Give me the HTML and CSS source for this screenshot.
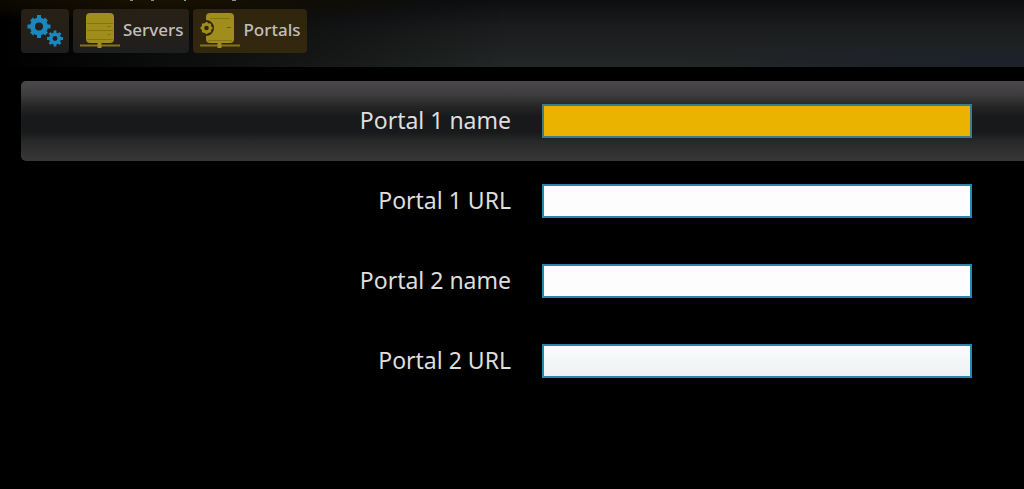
FILE: index.html
```
<!DOCTYPE html>
<html lang="en">
<head>
    <meta charset="UTF-8">
    <meta name="viewport" content="width=device-width, initial-scale=1.0">
    <title>Portals</title>
    <link rel="stylesheet" href="styles.css">
</head>
<body>

    <!-- Top bar with breadcrumb buttons -->
    <header class="topbar">
        <svg class="topbar-marks" width="120" height="1" aria-hidden="true">
            <path d="M10 0h3M31 0h3M112 0h4" stroke="#8f8d82" stroke-width="2"/>
            <path d="M64 0h2" stroke="#7fae78" stroke-width="2"/>
        </svg>
        <nav class="crumbs">
            <button type="button" class="crumb crumb-settings" aria-label="Settings">
                <svg width="48" height="44" viewBox="0 0 48 44" fill="none" stroke="#1b87bf">
                    <circle cx="18" cy="17.5" r="6.5" stroke-width="5"/>
                    <g stroke-width="4">
                        <path d="M18 6v4M18 25v4M6.5 17.5h4M25.5 17.5h4"/>
                        <path d="M10.5 10l3 3M22.5 22l3 3M25.5 10l-3 3M13.5 22l-3 3"/>
                    </g>
                    <circle cx="34" cy="29.5" r="4.2" stroke-width="3.6"/>
                    <g stroke-width="2.8">
                        <path d="M34 21.5v3M34 34.5v3M26 29.5h3M39 29.5h3"/>
                        <path d="M28.6 24.1l2 2M37.4 32.9l2 2M39.4 24.1l-2 2M30.6 32.9l-2 2"/>
                    </g>
                </svg>
            </button>
            <button type="button" class="crumb">
                <svg width="40" height="36" viewBox="0 0 40 36">
                    <rect x="6" y="0" width="28" height="30" rx="4" fill="#a18d1c"/>
                    <path d="M7 10.5h26M7 17.5h26M7 26.5h26" stroke="#84731b" fill="none"/>
                    <path d="M27 13.5h4M27 21.5h4" stroke="#84731b" fill="none"/>
                    <path d="M0 32.5h40" stroke="#85741c" stroke-width="2"/>
                    <path d="M19.5 30v5" stroke="#a18d1c" stroke-width="4"/>
                </svg>
                <span>Servers</span>
            </button>
            <button type="button" class="crumb crumb-active">
                <svg width="40" height="36" viewBox="0 0 40 36">
                    <path d="M10 0h20q4 0 4 4v22q0 4-4 4H10q-4 0-4-4v-3a8 8 0 0 0 0-16V4q0-4 4-4z" fill="#a18d1c"/>
                    <path d="M10 5.5h20M8 27.5h24" stroke="#84731b" fill="none"/>
                    <path d="M27 14.5h4" stroke="#6d5f19" fill="none"/>
                    <circle cx="6.5" cy="15" r="3.8" fill="none" stroke="#a18d1c" stroke-width="3"/>
                    <path d="M6.5 9v2M6.5 19v2M.5 15h2M10.500 15h2M2.3 10.8l1.500 1.500M9.200 17.700l1.500 1.500M10.700 10.800l-1.500 1.500M3.800 17.700l-1.500 1.500" stroke="#a18d1c" stroke-width="2"/>
                    <path d="M0 32.5h40" stroke="#85741c" stroke-width="2"/>
                    <path d="M19.5 30v5" stroke="#a18d1c" stroke-width="4"/>
                </svg>
                <span>Portals</span>
            </button>
        </nav>
    </header>

    <!-- Portal settings -->
    <form class="portal-form">
        <div class="form-row selected">
            <label for="portal1-name">Portal 1 name</label>
            <input type="text" id="portal1-name">
        </div>
        <div class="form-row">
            <label for="portal1-url">Portal 1 URL</label>
            <input type="text" id="portal1-url">
        </div>
        <div class="form-row">
            <label for="portal2-name">Portal 2 name</label>
            <input type="text" id="portal2-name">
        </div>
        <div class="form-row">
            <label for="portal2-url">Portal 2 URL</label>
            <input type="text" id="portal2-url" class="shaded">
        </div>
    </form>

</body>
</html>
```
FILE: styles.css
```
* {
    box-sizing: border-box;
}
body {
    margin: 0;
    background-color: #000;
    color: #dededc;
    font-family: "Noto Sans", "Open Sans", sans-serif;
}
.topbar {
    position: relative;
    padding: 9px 21px 14px;
    background:
        radial-gradient(ellipse at 16% 0, #191201 0, rgba(25, 18, 1, 0) 24%),
        radial-gradient(ellipse at 100% 90%, #1c202a 0, rgba(28, 32, 42, 0) 25%),
        linear-gradient(to right, #000 0, rgba(0, 0, 0, 0) 50%),
        linear-gradient(#0c0e10, #1b1c1d 40%, #232726);
}
/* Tips of the title line scrolled off above */
.topbar-marks {
    position: absolute;
    top: 0;
    left: 120px;
}
.crumbs {
    display: flex;
    gap: 4px;
}
.crumb {
    display: flex;
    align-items: center;
    gap: 3px;
    height: 44px;
    padding: 0 6px 0 7px;
    border: none;
    border-radius: 4px;
    background: linear-gradient(#272015, #241f19 60%, #1e1e20);
    color: #c0bfbd;
    font-family: inherit;
    font-size: 17px;
    font-weight: 500;
    cursor: pointer;
}
.crumb span {
    padding-bottom: 3px;
}
.crumb-settings {
    padding: 0;
}
.crumb-active {
    background: linear-gradient(#2f240c, #33280f);
}
.portal-form {
    margin: 14px 0 0 21px;
}
.form-row {
    display: grid;
    grid-template-columns: 49fr 43fr;
    align-items: center;
    gap: 31px;
    height: 80px;
    padding-right: 52px;
}
.form-row.selected {
    border-radius: 5px 0 0 5px;
    background: linear-gradient(#4b4a4b, #3d3b3d 18%, #232423 33%, #18191b 45%, #18191a 64%, #272827 75%, #383839);
}
.form-row label {
    padding-bottom: 3px;
    font-size: 23px;
    line-height: 32px;
    text-align: right;
}
.form-row input {
    width: 100%;
    height: 34px;
    padding: 0 8px;
    border: 2px solid #2b86ab;
    outline: none;
    background-color: #fdfdfd;
    font-family: inherit;
    font-size: 20px;
}
.form-row.selected input {
    border-color: #3f7c8b;
    background-color: #e9b300;
}
.form-row input.shaded {
    background: linear-gradient(#f8fdfe, #eff0f2);
}
```
